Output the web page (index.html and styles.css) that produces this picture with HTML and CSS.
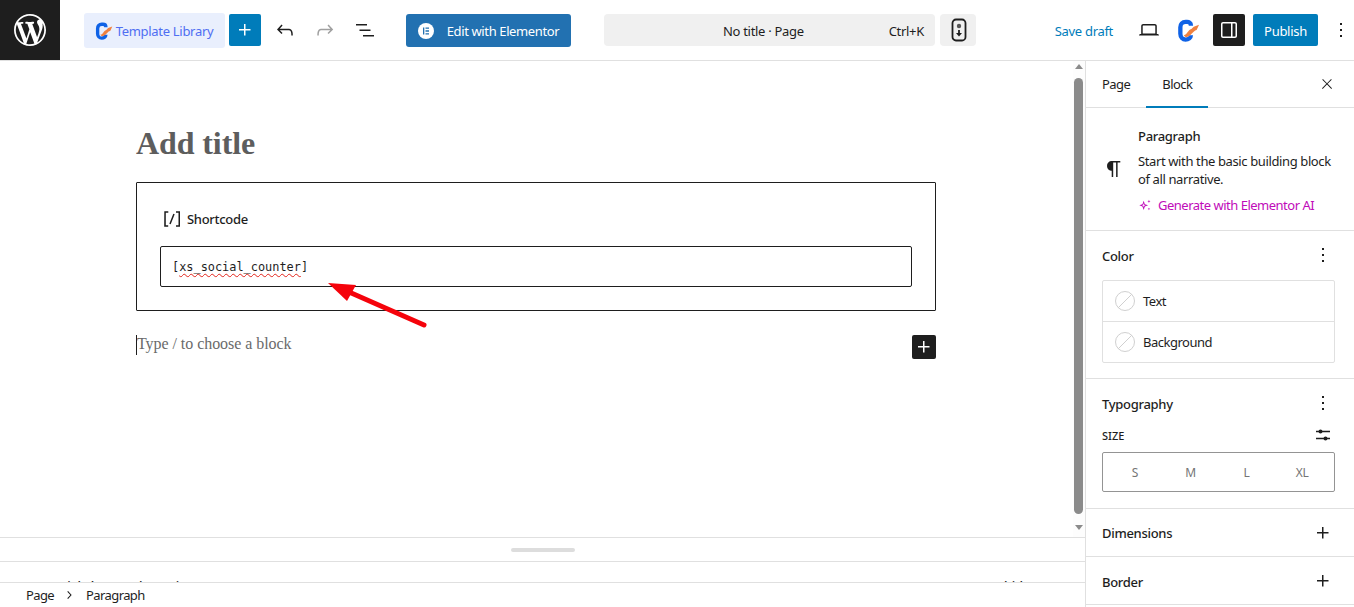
FILE: index.html
```html
<!DOCTYPE html>
<html lang="en">
<head>
<meta charset="utf-8">
<title>Add New Page</title>
<link rel="stylesheet" href="styles.css">
</head>
<body>
<div class="app">
  <header class="topbar">
    <a class="wp-logo"><svg viewBox="0 0 20 20" width="32" height="32"><path fill="#fff" d="M20 10c0-5.51-4.49-10-10-10C4.48 0 0 4.49 0 10c0 5.52 4.48 10 10 10 5.51 0 10-4.48 10-10zM7.78 15.37L4.37 6.22c.55-.02 1.17-.08 1.17-.08.5-.06.44-1.13-.06-1.11 0 0-1.45.11-2.37.11-.18 0-.37 0-.58-.01C4.12 2.69 6.87 1.11 10 1.11c2.33 0 4.45.87 6.05 2.34-.68-.11-1.65.39-1.65 1.58 0 .74.45 1.36.9 2.1.35.61.55 1.36.55 2.46 0 1.49-1.4 5-1.4 5l-3.03-8.37c.54-.02.82-.17.82-.17.5-.05.44-1.25-.06-1.22 0 0-1.44.12-2.38.12-.87 0-2.33-.12-2.33-.12-.5-.03-.56 1.2-.06 1.22l.92.08 1.26 3.41zM17.41 10c.24-.64.74-1.87.43-4.25.7 1.29 1.05 2.71 1.05 4.25 0 3.29-1.73 6.24-4.4 7.78.97-2.59 1.94-5.2 2.92-7.78zM6.1 18.09C3.12 16.65 1.11 13.53 1.11 10c0-1.3.23-2.48.72-3.59C3.25 10.3 4.67 14.2 6.1 18.09zm4.03-6.63l2.58 6.98c-.86.29-1.76.45-2.71.45-.79 0-1.57-.11-2.29-.33.81-2.38 1.62-4.74 2.42-7.1z"/></svg></a>
    <div class="tools">
      <button class="template-btn">
        <svg class="g-logo" viewBox="0 0 24 24" width="18" height="18"><path d="M14.5 7V6.500C14.500 4 12.500 3 10.500 3H9C5.500 3 3.500 5.500 3.500 8.500V15.500C3.500 19 6 21.500 9 21.500C12 21.500 14.500 19.500 14.500 17" fill="none" stroke="#0f62e6" stroke-width="4.500"/><path d="M7 17C11.500 16 11 11.500 15 10.500L17.500 8L23 6L20.500 11.500C16 12.500 15.500 18 9 19Z" fill="#f0813f"/></svg>
        <span>Template Library</span>
      </button>
      <button class="icon-btn primary"><svg viewBox="0 0 24 24" width="24" height="24"><path fill="#fff" d="M11 12.5V17.5H12.5V12.5H17.5V11H12.5V6H11V11H6V12.5H11Z"/></svg></button>
      <button class="icon-btn"><svg viewBox="0 0 24 24" width="24" height="24"><path fill="#1e1e1e" d="M18.3 11.7c-.6-.6-1.4-.9-2.3-.9H6.7l2.9-3.3-1.1-1-4.5 5L8.5 16l1-1-2.7-2.7H16c.5 0 .9.2 1.3.5 1 1 1 3.4 1 4.5v.3h1.500v-.2c0-1.500 0-4.300-1.500-5.700z"/></svg></button>
      <button class="icon-btn"><svg viewBox="0 0 24 24" width="24" height="24"><path fill="#a0a0a0" d="M15.6 6.5l-1.1 1 2.9 3.3H8c-.9 0-1.700.3-2.300.9-1.400 1.500-1.400 4.200-1.400 5.600v.2h1.500v-.3c0-1.100 0-3.500 1-4.500.3-.3.7-.5 1.300-.5h9.200L14.500 15l1.100 1.100 4.600-4.600-4.600-5z"/></svg></button>
      <button class="icon-btn"><svg viewBox="0 0 24 24" width="24" height="24"><path fill="#1e1e1e" d="M3 6h11v1.500H3V6zm3.500 5.500h11V13h-11v-1.500zM21 17H10v1.500h11V17z"/></svg></button>
      <button class="elementor-btn">
        <svg viewBox="0 0 16 16" width="16" height="16"><circle cx="8" cy="8" r="8" fill="#fff"/><path fill="#2271b1" d="M5 4.500h1.300v7H5zM7.500 4.500h3.500v1.300H7.500zM7.500 7.350h3.500v1.300H7.500zM7.500 10.200h3.500v1.300H7.500z"/></svg>
        <span>Edit with Elementor</span>
      </button>
    </div>
    <div class="center">
      <div class="command"><span class="command-title">No title · Page</span><span class="command-key">Ctrl+K</span></div>
      <button class="remote-btn"><svg viewBox="0 0 16 24" width="16" height="24"><rect x="1.500" y="1.500" width="13" height="21" rx="3.500" fill="none" stroke="#1e1e1e" stroke-width="1.800"/><circle cx="8" cy="8" r="2.200" fill="#555"/><path d="M8 12v4" stroke="#1e1e1e" stroke-width="1.800"/><path d="M5 15h6l-3 3.500z" fill="#1e1e1e"/></svg></button>
    </div>
    <div class="actions">
      <a class="save">Save draft</a>
      <button class="icon-btn device"><svg viewBox="0 0 24 24" width="24" height="24"><path fill="#1e1e1e" d="M20.500 16h-.7V8c0-1.100-.9-2-2-2H6.200c-1.100 0-2 .9-2 2v8h-.7c-.8 0-1.500.7-1.500 1.500h20c0-.8-.7-1.500-1.500-1.500zM5.700 8c0-.3.2-.5.5-.5h11.600c.3 0 .5.2.5.5v7.600H5.700V8z"/></svg></button>
      <svg class="g-big" viewBox="0 0 24 24" width="23" height="23"><path d="M14.500 7V6.500C14.500 4 12.500 3 10.500 3H9C5.500 3 3.500 5.500 3.500 8.500V15.500C3.500 19 6 21.500 9 21.500C12 21.500 14.500 19.500 14.500 17" fill="none" stroke="#0f62e6" stroke-width="4.500"/><path d="M7 17C11.500 16 11 11.500 15 10.500L17.500 8L23 6L20.500 11.500C16 12.500 15.500 18 9 19Z" fill="#f0813f"/></svg>
      <button class="icon-btn dark"><svg viewBox="0 0 24 24" width="24" height="24"><path fill="#fff" d="M18 4H6c-1.100 0-2 .9-2 2v12c0 1.100.9 2 2 2h12c1.100 0 2-.9 2-2V6c0-1.100-.9-2-2-2zm-4 14.500H6c-.3 0-.5-.2-.5-.5V6c0-.3.2-.5.5-.5h8v13zm4.500-.5c0 .3-.2.5-.5.5h-2.500v-13H18c.3 0 .5.2.5.5v12z"/></svg></button>
      <button class="publish">Publish</button>
      <button class="icon-btn more"><svg viewBox="0 0 24 24" width="24" height="24"><path fill="#1e1e1e" d="M13 19h-2v-2h2v2zm0-6h-2v-2h2v2zm0-6h-2V5h2v2z"/></svg></button>
    </div>
  </header>

  <div class="workspace">
    <main class="main">
      <div class="canvas">
        <div class="doc">
          <div class="content">
            <h1 class="title">Add title</h1>
            <section class="shortcode">
              <div class="shortcode-label">
                <svg viewBox="0 0 24 24" width="24" height="24"><path fill="#1e1e1e" d="M16 4.200v1.500h2.500v12.500H16v1.500h4V4.200h-4zM4.200 19.800h4v-1.500H5.800V5.800h2.500V4.200h-4l-.1 15.600zm5.100-3.100l1.400.6 4-10-1.400-.6-4 10z"/></svg>
                <span>Shortcode</span>
              </div>
              <div class="shortcode-input"><span class="sc-text"><span>[</span><span class="misspelled">xs_social_counter</span><span>]</span></span></div>
            </section>
            <div class="placeholder-row">
              <p class="placeholder">Type / to choose a block</p>
              <button class="inserter"><svg viewBox="0 0 24 24" width="24" height="24"><path fill="#fff" d="M11 12.500V17.500H12.500V12.500H17.500V11H12.500V6H11V11H6V12.500H11Z"/></svg></button>
            </div>
          </div>
          <svg class="arrow" viewBox="0 0 110 60" width="110" height="60"><path d="M103 48 L28 15" stroke="#f5030b" stroke-width="5" stroke-linecap="round"/><path d="M7 6 L35 8 L26 24 Z" fill="#f5030b"/></svg>
        </div>
        <div class="scrollbar">
          <span class="arrow-up"></span>
          <span class="thumb"></span>
          <span class="arrow-down"></span>
        </div>
      </div>
      <div class="meta">
        <div class="resize"><span class="handle"></span></div>
        <div class="meta-body">
          <span>WP Social Share Style Setting</span>
          <span class="meta-right">Auto-hide</span>
        </div>
      </div>
      <footer class="breadcrumb">
        <span>Page</span>
        <svg viewBox="0 0 24 24" width="16" height="16"><path fill="#1e1e1e" d="M10.600 6L9.400 7l4.600 5-4.600 5 1.200 1 5.400-6z"/></svg>
        <span>Paragraph</span>
      </footer>
    </main>

    <aside class="sidebar">
      <div class="tabs">
        <div class="tab-list"><span class="tab">Page</span><span class="tab active">Block</span></div>
        <button class="close"><svg viewBox="0 0 24 24" width="16" height="16"><path fill="#1e1e1e" d="M13 11.800l6.100-6.300-1-1-6.100 6.200-6.100-6.200-1 1 6.100 6.300-6.500 6.700 1 1 6.500-6.600 6.500 6.600 1-1z"/></svg></button>
      </div>
      <section class="block-card">
        <svg class="para-icon" viewBox="0 0 24 24" width="24" height="24"><path fill="#1e1e1e" d="M18.300 4H9.900v-.1l-.9.2c-2.300.4-4 2.400-4 4.800s1.700 4.400 4 4.800l.7.100V20h1.500V5.500h2.900V20h1.500V5.500h2.700V4z"/></svg>
        <div class="card-text">
          <h2>Paragraph</h2>
          <p>Start with the basic building block of all narrative.</p>
          <a class="ai"><svg viewBox="0 0 16 16" width="14" height="14"><path fill="#c00bb9" d="M6.500 3l1.300 4 3.700 1.300-3.700 1.400-1.300 4-1.400-4L1.500 8.300l3.600-1.300zM6.500 6l-.5 1.600-1.500.7 1.500.6.500 1.600.5-1.600 1.500-.6-1.500-.7z"/><path fill="#c00bb9" d="M12.500 2l.5 1.300 1.300.5-1.300.5-.5 1.300-.5-1.300-1.300-.5 1.300-.5zM12.500 11l.4 1.100 1.100.4-1.100.4-.4 1.100-.4-1.100-1.100-.4 1.100-.4z"/></svg><span>Generate with Elementor AI</span></a>
        </div>
      </section>
      <section class="panel color">
        <div class="panel-head"><h3>Color</h3><svg viewBox="0 0 24 24" width="24" height="24"><path fill="#1e1e1e" d="M13 19h-2v-2h2v2zm0-6h-2v-2h2v2zm0-6h-2V5h2v2z"/></svg></div>
        <div class="color-list">
          <div class="color-item"><span class="swatch"></span><span>Text</span></div>
          <div class="color-item"><span class="swatch"></span><span>Background</span></div>
        </div>
      </section>
      <section class="panel typography">
        <div class="panel-head"><h3>Typography</h3><svg viewBox="0 0 24 24" width="24" height="24"><path fill="#1e1e1e" d="M13 19h-2v-2h2v2zm0-6h-2v-2h2v2zm0-6h-2V5h2v2z"/></svg></div>
        <div class="size-head"><span>SIZE</span><svg viewBox="0 0 16 14" width="16" height="14"><path stroke="#1e1e1e" stroke-width="1.300" d="M1 3.500h14M1 10.500h14"/><circle cx="5.500" cy="3.500" r="2" fill="#1e1e1e"/><circle cx="10.500" cy="10.500" r="2" fill="#1e1e1e"/></svg></div>
        <div class="size-group"><span>S</span><span>M</span><span>L</span><span>XL</span></div>
      </section>
      <section class="panel collapsed">
        <h3>Dimensions</h3>
        <svg viewBox="0 0 24 24" width="24" height="24"><path fill="#1e1e1e" d="M11 12.500V17.500H12.500V12.500H17.500V11H12.500V6H11V11H6V12.500H11Z"/></svg>
      </section>
      <section class="panel collapsed">
        <h3>Border</h3>
        <svg viewBox="0 0 24 24" width="24" height="24"><path fill="#1e1e1e" d="M11 12.500V17.500H12.500V12.500H17.500V11H12.500V6H11V11H6V12.500H11Z"/></svg>
      </section>
    </aside>
  </div>
</div>
</body>
</html>
```

FILE: styles.css
```css
* { box-sizing: border-box; }
html, body { margin: 0; height: 100%; overflow: hidden; }
body { font-family: "Noto Sans", sans-serif; font-size: 13px; letter-spacing: -0.3px; color: #1e1e1e; background: #fff; }
button { font: inherit; letter-spacing: inherit; border: 0; padding: 0; background: none; color: inherit; display: flex; align-items: center; justify-content: center; }
h1, h2, h3, p { margin: 0; }

.app { display: flex; flex-direction: column; height: 607px; }

/* top bar */
.topbar { height: 61px; flex: none; display: flex; align-items: center; border-bottom: 1px solid #e0e0e0; }
.wp-logo { width: 60px; height: 60px; background: #1e1e1e; display: flex; align-items: center; justify-content: center; flex: none; }
.tools { display: flex; align-items: center; margin-left: 24px; }
.template-btn { width: 141px; height: 35px; background: #e9effd; color: #4f6ef2; border-radius: 3px; gap: 3px; padding: 1px 1px 0 0; }
.g-logo { flex: none; }
.icon-btn { width: 32px; height: 32px; border-radius: 2px; flex: none; }
.tools .icon-btn { margin-left: 8px; }
.tools .icon-btn.primary { margin-left: 4px; background: #007cba; }
.elementor-btn { width: 165px; height: 33px; margin-left: 25px; background: #2271b1; color: #fff; border-radius: 3px; gap: 13px; padding-top: 1px; letter-spacing: -0.38px; }
.center { display: flex; align-items: center; margin-left: 33px; }
.command { width: 331px; height: 32px; background: #f0f0f0; border-radius: 4px; display: flex; align-items: center; justify-content: space-between; padding: 1px 11px 0 119px; }
.remote-btn { width: 36px; height: 32px; background: #f0f0f0; border-radius: 4px; margin-left: 5px; padding-left: 2px; }
.actions { display: flex; align-items: center; margin-left: auto; }
.save { color: #007cba; margin-right: 20px; padding-top: 1px; }
.g-big { margin: 0 13px 0 12px; flex: none; }
.dark { background: #1e1e1e; }
.publish { width: 65px; height: 32px; margin-left: 8px; background: #007cba; color: #fff; border-radius: 2px; padding-top: 1px; }
.more { width: 36px; padding-left: 10px; }

/* workspace */
.workspace { flex: 1; min-height: 0; display: flex; }
.main { flex: 1; min-width: 0; display: flex; flex-direction: column; }
.canvas { flex: 1; min-height: 0; display: flex; }
.doc { flex: 1; position: relative; }
.content { width: 800px; margin-left: 136px; }
.title { font: bold 32px/1.2 "Liberation Serif", serif; letter-spacing: -0.1px; color: #5d5d5d; padding-top: 63px; height: 121px; }
.shortcode { height: 129px; border: 1px solid #1e1e1e; border-radius: 1px; padding: 20px 23px 0; }
.shortcode-label { display: flex; align-items: center; gap: 3px; height: 32px; font-weight: 500; font-size: 13px; }
.shortcode-input { margin-top: 11px; height: 41px; border: 1px solid #1e1e1e; border-radius: 2px; padding: 0 11px; display: flex; align-items: center; font: 11.9px "DejaVu Sans Mono", monospace; letter-spacing: 0; }
.misspelled { text-decoration: underline wavy #e2231a 1px; text-underline-offset: 2px; }
.placeholder-row { display: flex; justify-content: space-between; align-items: flex-start; margin-top: 24px; }
.placeholder { font: 16px/18px "Liberation Serif", serif; letter-spacing: -0.05px; color: #6a6a6a; border-left: 1px solid #1e1e1e; height: 20px; }
.inserter { width: 24px; height: 24px; background: #1e1e1e; border-radius: 2px; }
.arrow { position: absolute; left: 321px; top: 216px; }

/* scrollbar */
.scrollbar { width: 12px; display: flex; flex-direction: column; align-items: center; background: #fdfdfd; padding: 3px 1px 0 0; }
.arrow-up { width: 0; height: 0; border: 4.500px solid transparent; border-top: 0; border-bottom: 5px solid #8b8b8b; }
.thumb { width: 9px; height: 436px; background: #8b8b8b; border-radius: 5px; margin-top: 9px; }
.arrow-down { width: 0; height: 0; border: 4.500px solid transparent; border-bottom: 0; border-top: 5px solid #8b8b8b; margin-top: 11px; }

/* meta */
.meta { flex: none; height: 45px; border-top: 1px solid #e0e0e0; overflow: hidden; }
.resize { height: 24px; border-bottom: 1px solid #e0e0e0; display: flex; align-items: center; justify-content: center; }
.handle { width: 64px; height: 4px; border-radius: 2px; background: #ddd; }
.meta-body { display: flex; justify-content: space-between; padding: 15px 55px 0 24px; font-weight: 500; }
.breadcrumb { flex: none; height: 25px; border-top: 1px solid #e0e0e0; display: flex; align-items: center; padding-left: 26px; letter-spacing: -0.6px; }
.breadcrumb svg { margin: 0 9px 0 7px; }

/* sidebar */
.sidebar { width: 269px; flex: none; border-left: 1px solid #e0e0e0; }
.tabs { height: 47px; display: flex; align-items: center; justify-content: space-between; border-bottom: 1px solid #e0e0e0; padding-right: 19px; }
.tab-list { display: flex; height: 47px; letter-spacing: -0.55px; }
.tab { padding: 0 16px; display: flex; align-items: center; }
.tab.active { box-shadow: inset 0 -2px 0 #007cba; }
.block-card { height: 123px; display: flex; gap: 12px; padding: 15px 16px 0 16px; border-bottom: 1px solid #e0e0e0; }
.para-icon { margin-top: 34px; flex: none; }
.card-text h2 { font-size: 13px; font-weight: 500; line-height: 18px; margin-top: 4px; }
.card-text p { line-height: 18px; margin-top: 7px; letter-spacing: -0.38px; }
.ai { display: flex; align-items: center; gap: 6px; color: #c00bb9; margin-top: 8px; line-height: 18px; letter-spacing: -0.5px; }
.panel { padding: 0 16px; border-bottom: 1px solid #e0e0e0; }
.panel h3 { font-size: 13px; font-weight: 500; padding-top: 1px; }
.collapsed:last-child h3 { padding-top: 3px; }
.panel-head { height: 48px; display: flex; align-items: center; justify-content: space-between; margin-right: 3px; }
.color { height: 148px; }
.color-list { border: 1px solid #e0e0e0; border-radius: 2px; margin: 1px 3px 0 0; letter-spacing: -0.5px; }
.color-item { height: 40px; display: flex; align-items: center; gap: 8px; padding-left: 12px; }
.color-item + .color-item { height: 41px; border-top: 1px solid #e0e0e0; }
.swatch { width: 20px; height: 20px; border-radius: 50%; border: 1px solid #d0d0d0; background: linear-gradient(135deg, transparent 48%, #d0d0d0 48%, #d0d0d0 52%, transparent 52%); }
.typography { height: 130px; }
.size-head { display: flex; justify-content: space-between; align-items: center; font-size: 11px; font-weight: 500; letter-spacing: 0; height: 16px; margin-right: 7px; }
.size-group { margin-top: 9px; height: 40px; border: 1px solid #949494; border-radius: 2px; display: grid; grid-template-columns: repeat(4, 1fr); padding: 0 4px; align-items: center; justify-items: center; font-size: 12px; color: #757575; margin-right: 3px; }
.collapsed { height: 48px; display: flex; align-items: center; justify-content: space-between; padding-right: 19px; }
```
